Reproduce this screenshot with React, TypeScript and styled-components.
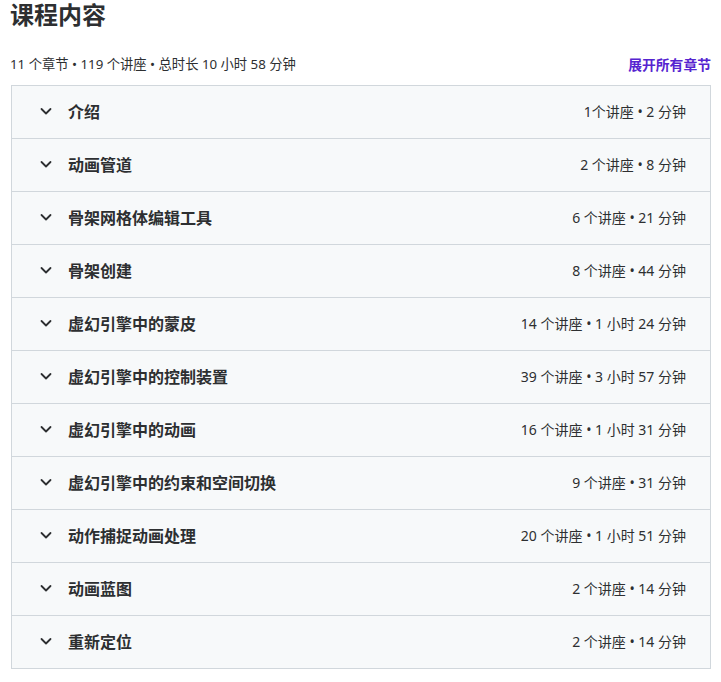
import React from 'react';
import styled, { createGlobalStyle } from 'styled-components';

const GlobalStyle = createGlobalStyle`
    body {
        margin: 0;
        background: #fff;
        font-family: 'Noto Sans', 'Noto Sans CJK SC', sans-serif;
        color: #2d2f31;
    }
`;

interface Section {
    title: string;
    meta: string;
}

const sections: Section[] = [
    { title: '介绍', meta: '1个讲座 • 2 分钟' },
    { title: '动画管道', meta: '2 个讲座 • 8 分钟' },
    { title: '骨架网格体编辑工具', meta: '6 个讲座 • 21 分钟' },
    { title: '骨架创建', meta: '8 个讲座 • 44 分钟' },
    { title: '虚幻引擎中的蒙皮', meta: '14 个讲座 • 1 小时 24 分钟' },
    { title: '虚幻引擎中的控制装置', meta: '39 个讲座 • 3 小时 57 分钟' },
    { title: '虚幻引擎中的动画', meta: '16 个讲座 • 1 小时 31 分钟' },
    { title: '虚幻引擎中的约束和空间切换', meta: '9 个讲座 • 31 分钟' },
    { title: '动作捕捉动画处理', meta: '20 个讲座 • 1 小时 51 分钟' },
    { title: '动画蓝图', meta: '2 个讲座 • 14 分钟' },
    { title: '重新定位', meta: '2 个讲座 • 14 分钟' },
];

const Page = styled.div`
    width: 700px;
    padding: 0 10px 0 11px;
`;

const Heading = styled.h2`
    margin: 0 0 0 -1px;
    font-family: 'Noto Sans CJK SC', sans-serif;
    font-size: 24px;
    line-height: 28px;
    font-weight: 700;
    color: #2d2f31;
`;

const MetaBar = styled.div`
    display: flex;
    justify-content: space-between;
    align-items: center;
    margin-top: 25px;
    margin-bottom: 11px;
    height: 21px;
`;

const Summary = styled.span`
    font-size: 13.3px;
    margin-left: -1px;
`;

const ExpandLink = styled.button`
    border: 0;
    background: none;
    padding: 0;
    font-family: inherit;
    font-size: 13.8px;
    font-weight: 700;
    color: #5624d0;
    cursor: pointer;
`;

const Accordion = styled.div`
    border: 1px solid #d1d7dc;
    border-bottom: 0;
`;

const Row = styled.div`
    display: flex;
    align-items: center;
    height: 53px;
    padding: 0 24px 2px 26px;
    box-sizing: border-box;
    background: #f7f9fa;
    border-bottom: 1px solid #d1d7dc;
`;

const Chevron = styled.svg`
    width: 16px;
    height: 16px;
    flex: none;
    margin-right: 14px;
`;

const RowTitle = styled.span`
    flex: 1;
    font-size: 16px;
    font-weight: 700;
    color: #2d2f31;
`;

const RowMeta = styled.span`
    font-size: 14px;
    color: #2d2f31;
`;

const App: React.FC = () => {
    return (
        <Page>
            <GlobalStyle />
            <Heading>课程内容</Heading>
            <MetaBar>
                <Summary>11 个章节 • 119 个讲座 • 总时长 10 小时 58 分钟</Summary>
                <ExpandLink>展开所有章节</ExpandLink>
            </MetaBar>
            <Accordion>
                {sections.map((s) => (
                    <Row key={s.title}>
                        <Chevron viewBox="0 0 16 16">
                            <polyline
                                points="3.5,6 8,10.5 12.5,6"
                                fill="none"
                                stroke="#2d2f31"
                                strokeWidth="1.8"
                                strokeLinecap="round"
                                strokeLinejoin="round"
                            />
                        </Chevron>
                        <RowTitle>{s.title}</RowTitle>
                        <RowMeta>{s.meta}</RowMeta>
                    </Row>
                ))}
            </Accordion>
        </Page>
    );
};

export default App;
